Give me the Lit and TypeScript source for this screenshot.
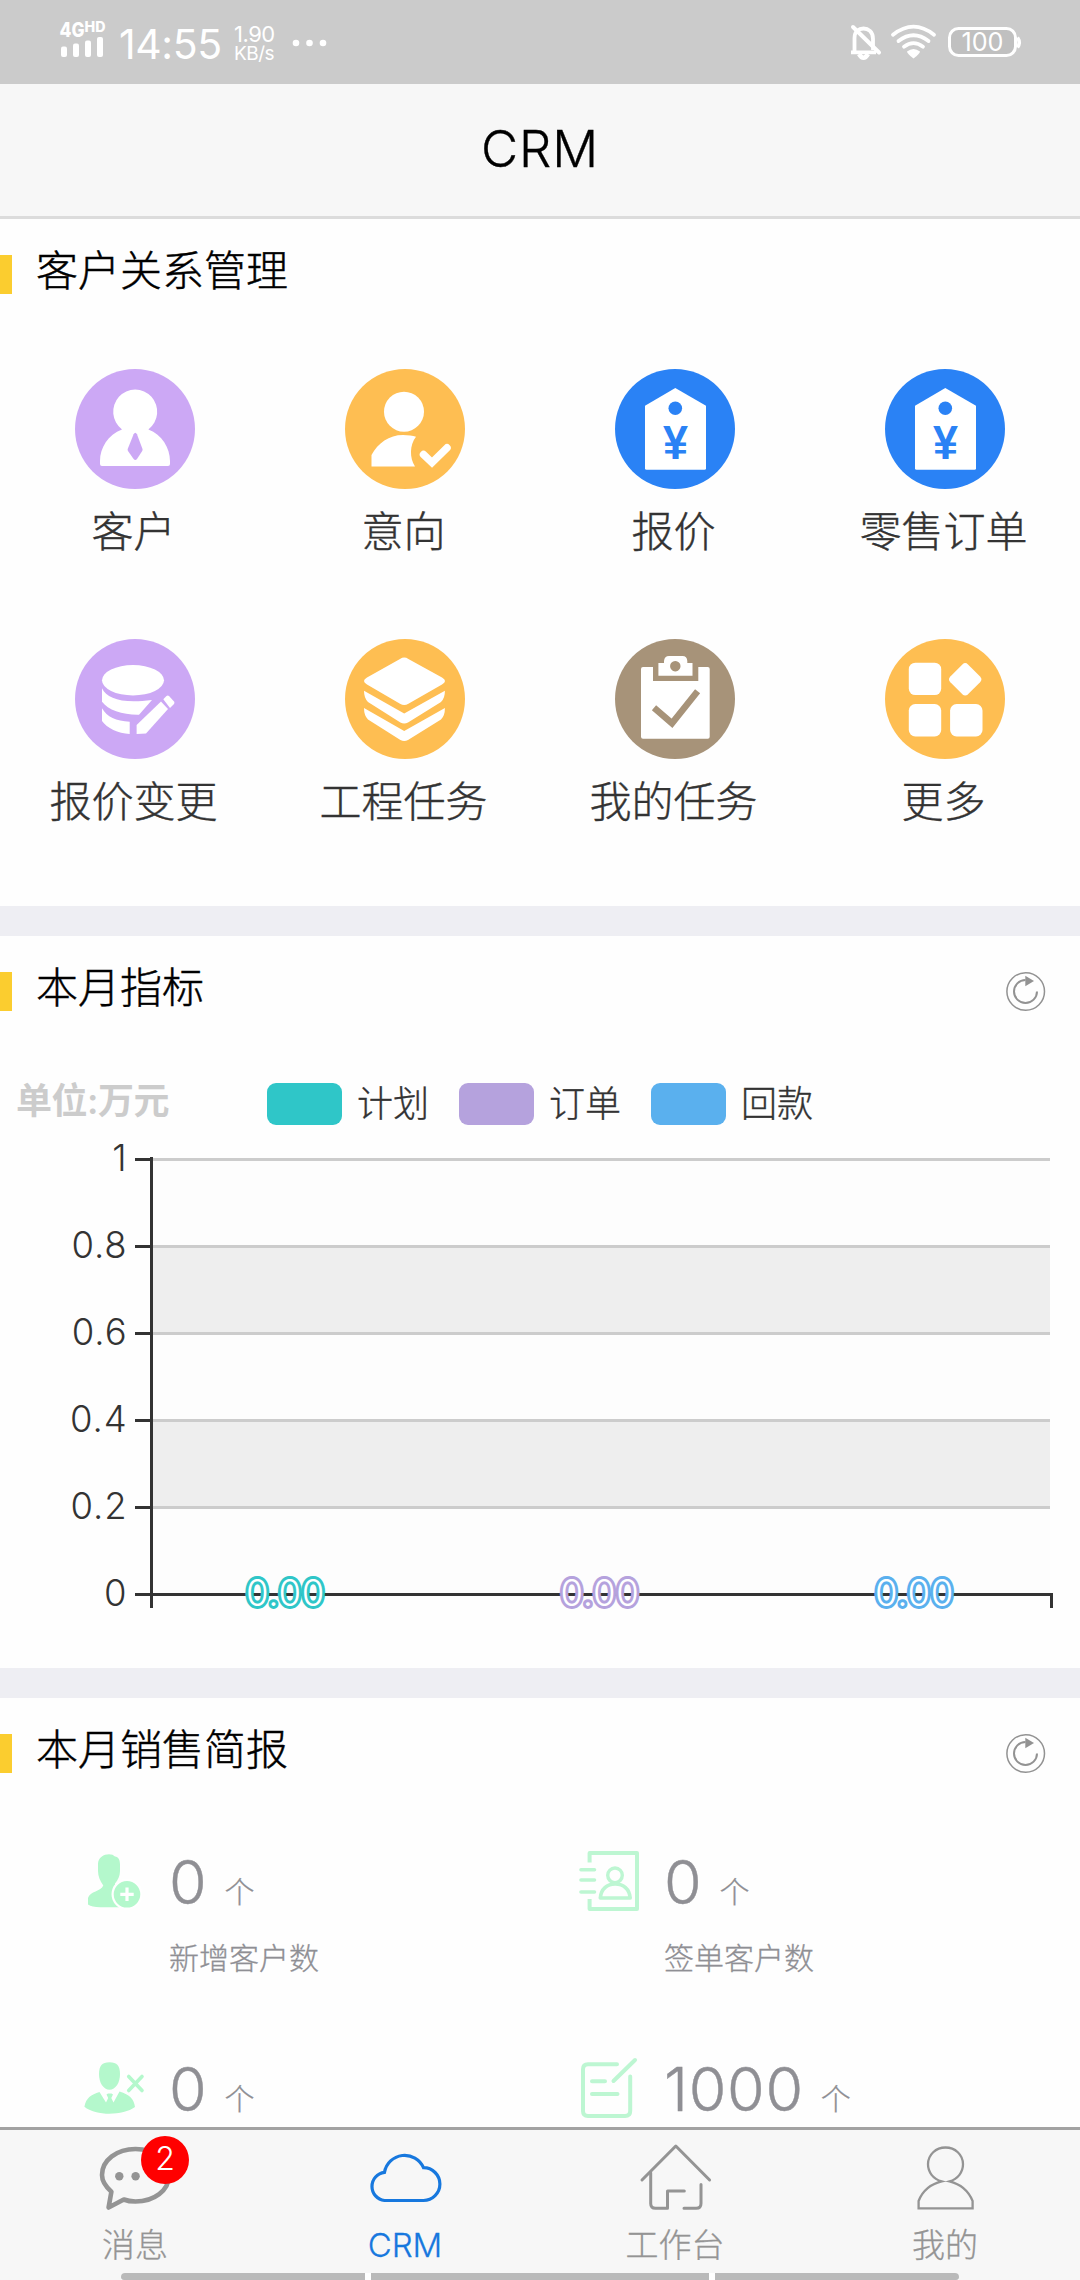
import { LitElement, html, svg, css } from "lit";
import { customElement } from "lit/decorators.js";

const PURPLE = "#cca8f5";
const ORANGE = "#febe52";
const BLUE = "#2a82f5";
const BROWN = "#a79379";

const tagIcon = svg`
  <path fill="#fff" d="M60.3 19 91 36.7V99.2q0 1.5-1.5 1.5h-58q-1.5 0-1.5-1.5V36.7Z"/>
  <circle cx="60.3" cy="39.3" r="6.8" fill="${BLUE}"/>
  <text class="yen" x="48" y="89.7" textLength="25" lengthAdjust="spacingAndGlyphs">¥</text>`;

const apps = [
  { label: "客户", color: PURPLE, icon: svg`
      <path fill="#fff" d="M47 60.5A22 22.2 0 1 1 73.4 60.5C87 65.500 95 79 95 92v3q0 2-2 2H27q-2 0-2-2v-3C25 79 33 65.500 47 60.500Z"/>
      <path fill="${PURPLE}" d="M58.600 65.200q1.700-3 3.400 0L67.500 80q.3 1-.3 2L62 90q-1.700 2.200-3.400 0L53 82q-.6-1-.3-2Z"/>` },
  { label: "意向", color: ORANGE, icon: svg`
      <circle cx="59" cy="42.700" r="20" fill="#fff"/>
      <path fill="#fff" d="M26.500 97.500V86C33 74 44 66 58 66q8 0 13 1.800C64.500 76 64.500 89 70 97.500Z"/>
      <path fill="none" stroke="#fff" stroke-width="7.500" stroke-linecap="round" d="M78.500 85.500 87 93.600 102 78.800"/>` },
  { label: "报价", color: BLUE, icon: tagIcon },
  { label: "零售订单", color: BLUE, icon: tagIcon },
  { label: "报价变更", color: PURPLE, icon: svg`
      <g fill="#fff">
        <ellipse cx="58" cy="41.200" rx="31" ry="15.200"/>
        <path d="M27 49.300C32 60 48 65 77 61L64 75.700C48 76 33 71 27 62.700Z"/>
        <path d="M27 69.300C32 78 41 82 54.700 82.700V95C43 94.500 32 89 27 82Z"/>
        <path d="M61.600 86 86 62.500 93 70 71 94.500 61.600 95Z"/>
        <path d="M88.300 60.300 91.500 57q1.300-1 2.500 0l5 5.500q1 1.200 0 2.400L95 69Z"/>
      </g>` },
  { label: "工程任务", color: ORANGE, icon: svg`
      <g fill="#fff">
        <path d="M55 20q4.200-2.800 8.400 0L97 38.500q6 3.500 0 7L63.400 64.800q-4.200 2.400-8.400 0L22 45.500q-6-3.500 0-7Z"/>
        <path d="M19 51.700 59.200 74.500 99.900 51.700Q100 59 96 63L63 83.500q-3.800 2-7.600 0L23 63Q19 59 19 51.700Z"/>
        <path d="M19 69 59.200 92 99.900 69Q100 76.500 96 80.500L63 101q-3.800 2-7.600 0L23 80.500Q19 76.500 19 69Z"/>
      </g>` },
  { label: "我的任务", color: BROWN, icon: svg`
      <path fill="#fff" d="M28 28H38V42H83.300V28h9.400q2 0 2 2V97.700q0 2-2 2H28q-2 0-2-2V30q0-2 2-2Z"/>
      <path fill="#fff" fill-rule="evenodd" d="M43.400 24H49V22q.5-5 5-5h13.500q4.500 0 4.800 5v2h5.200V36.700H43.400ZM60.300 22a5.200 5.200 0 1 0 .01 0Z"/>
      <path fill="none" stroke="${BROWN}" stroke-width="6.500" d="M39 68.800 57 84.300 82.600 52.300"/>` },
  { label: "更多", color: ORANGE, icon: svg`
      <g fill="#fff">
        <rect x="23.800" y="23.700" width="32.400" height="32.400" rx="6.500"/>
        <rect x="23.800" y="65" width="32.400" height="32.400" rx="6.500"/>
        <rect x="65.100" y="65" width="32.400" height="32.400" rx="6.500"/>
        <rect x="67.700" y="27.800" width="25" height="25" rx="4" transform="rotate(45 80.200 40.300)"/>
      </g>` },
];

const legend = [
  { name: "计划", color: "#2fc6c8", x: 285.5 },
  { name: "订单", color: "#b5a2dd", x: 600 },
  { name: "回款", color: "#5ab0ee", x: 914.5 },
];

const ticks = ["1", "0.8", "0.6", "0.4", "0.2", "0"];

const stats = [
  { value: "0", label: "新增客户数", icon: svg`
      <path fill="#b4f8cc" d="M19.300 34.500C16 30 14 25 14 20V13C14 6.500 20 3.300 25 3.300q4 0 6 2.200c3.500.3 5 3.500 5 8V20c0 5-2 9-5 12.500V38l8 4-4 14.300H16Q8 56.300 4 53.500V47C6 40 17 40.500 19.300 34.500Z"/>
      <circle cx="43" cy="43.300" r="14.400" fill="#b4f8cc" stroke="#fff" stroke-width="2.200"/>
      <path fill="none" stroke="#fff" stroke-width="3.200" d="M36.300 43.300H49.700M43 36.600V50"/>` },
  { value: "0", label: "签单客户数", icon: svg`
      <g fill="none" stroke="#bdf6d2" stroke-width="4" stroke-linejoin="round">
        <path d="M10.600 11.500V2H58V58H10.600V48"/>
        <path stroke-linecap="round" stroke-width="3.600" d="M2 18.700H15.500M2 29H15.500M2 41H15.500"/>
        <circle cx="36" cy="24.300" r="7.300" stroke-width="3.400"/>
        <path stroke-width="3.600" d="M21.300 47C22 38 28 33 36.200 33S50.500 38 51.200 47Z"/>
      </g>` },
  { value: "0", label: "", icon: svg`
      <path fill="#b4f8cc" d="M15 16C15 8 18 4.300 25.500 4.300S36 8 36 16C36 25 31.500 31.700 25.500 31.700S15 25 15 16Z"/>
      <path fill="#b4f8cc" d="M15.500 34 22 44.500 24.200 40 22.500 36.500 24 35.500H27.500L29 36.500 27.300 40 29.500 44.500 35.500 33.500C46 37 50 41 51 49 45 53.500 35 55.700 25.500 55.700S6 53.500.4 48.700C2 40 7 36.500 15.500 34Z"/>
      <path fill="none" stroke="#b4f8cc" stroke-width="3.600" stroke-linecap="round" d="M44.700 18.500 58 32.500M58 18.500 44.700 32.500"/>` },
  { value: "1000", label: "", icon: svg`
      <g fill="none" stroke="#bdf6d2" stroke-width="4" stroke-linecap="round">
        <path d="M38 6.300H9Q4 6.300 4 11.300V53Q4 58 9 58H46Q51.200 58 51.200 53V18.500"/>
        <path d="M13 23.300H26M13 36H38.500M34.500 23 56 2"/>
      </g>` },
];

const tabs = [
  { label: "消息", active: false, badge: "2", icon: svg`
      <path fill="none" stroke="#949494" stroke-width="4.600" stroke-linejoin="round" d="M13.400 49.700C7 44 4 38 4 33 4 18 19 7 37.500 7S71 18 71 33.300 56 59.500 37.500 59.500C33 59.500 29 58.800 25.800 57.500L10.600 65.500Z"/>
      <circle cx="21.300" cy="34.300" r="4.200" fill="#949494"/><circle cx="37.600" cy="34.300" r="4.200" fill="#949494"/>` },
  { label: "CRM", active: true, badge: "", icon: svg`
      <path fill="none" stroke="#1778de" stroke-width="3.200" d="M16.500 58.500A14.200 14.200 0 0 1 16.500 30.300 20.500 20.500 0 0 1 55.500 25.700 16.400 16.400 0 0 1 55.500 58.500Z"/>` },
  { label: "工作台", active: false, badge: "", icon: svg`
      <g fill="none" stroke="#949494" stroke-width="3" stroke-linecap="round" stroke-linejoin="round">
        <path d="M4 38 37.800 4 71.600 38"/>
        <path d="M12.700 30.700V61.500q0 4.800 4.800 4.800H29.500V49H46.300M63 42.500V61.500q0 4.800-4.800 4.800H46"/>
      </g>` },
  { label: "我的", active: false, badge: "", icon: svg`
      <path fill="none" stroke="#949494" stroke-width="2.300" d="M33.700 39.400C25 37 20 30 20 22.300 20 12.500 28 5.500 37.500 5.500S55 12.500 55 22.300C55 30 50 37 41.500 39.400 52 42 60.500 49 64.600 59V66.300H10.600V59C14.500 49 23 42 33.700 39.400Z"/>` },
];

@customElement("app-root")
export class AppRoot extends LitElement {
  static styles = css`
    :host {
      display: flex;
      flex-direction: column;
      width: 1080px;
      height: 2280px;
      overflow: hidden;
      background: #fefefe;
      color: #000;
      font-family: Inter, "Noto Sans CJK SC", sans-serif;
      font-weight: 300;
    }
    svg { display: block; flex: none; overflow: visible; }
    .status {
      display: flex;
      align-items: center;
      height: 84px;
      flex: none;
      padding: 0 60px;
      box-sizing: border-box;
      background: #cbcbcb;
      color: #fff;
    }
    .net { font-weight: 800; fill: #fff; }
    .clock { width: 102px; margin-left: 13px; margin-top: 3px; font-size: 41px; line-height: 48px; font-weight: 400; letter-spacing: -0.4px; white-space: nowrap; }
    .speed { margin-left: 13px; margin-top: 3px; width: 58px; font-weight: 400; line-height: 20px; font-size: 19px; letter-spacing: -0.5px; }
    .speed .rate { font-size: 22px; }
    .grow { flex: 1; }
    .battery-text { font-size: 25px; font-weight: 400; fill: #fff; }
    .navbar {
      flex: none;
      height: 132px;
      display: flex;
      align-items: center;
      justify-content: center;
      background: #f7f7f7;
      border-bottom: 3px solid #dcdcdc;
      font-size: 51px;
    }
    .brand { margin-top: -4px; letter-spacing: 0.8px; -webkit-text-stroke: 0.3px; }
    .content { height: 1908px; flex: none; overflow: hidden; }
    .section { border-bottom: 30px solid #eeeef3; }
    .head { display: flex; padding-top: 36px; height: 39px; align-items: center; padding-right: 34px; }
    .mark { width: 12px; height: 39px; background: #fbcd2f; }
    .title { margin: -8px auto 0 24px; font-size: 42px; line-height: 42px; -webkit-text-stroke: 0.45px; }
    .apps { display: grid; grid-template-columns: repeat(4, 270px); grid-auto-rows: 270px; padding-top: 75px; height: 537px; box-sizing: content-box; }
    .app { display: flex; flex-direction: column; align-items: center; gap: 19px; color: #333; font-size: 42px; line-height: 48px; -webkit-text-stroke: 0.4px; }
    .app-name { margin-right: 3px; }
    .yen { font: bold 49px "Liberation Sans", sans-serif; fill: #2a82f5; -webkit-text-stroke: 0; }
    .legend { display: flex; align-items: center; height: 42px; margin-top: 72px; }
    .unit { width: 251px; margin-left: 16px; color: #ccc; font-size: 36px; line-height: 42px; font-weight: 600; letter-spacing: -0.5px; margin-top: -7px; }
    .item { display: flex; align-items: center; width: 192px; color: #333; font-size: 36px; line-height: 42px; -webkit-text-stroke: 0.35px; }
    .swatch { width: 75px; height: 42px; border-radius: 9px; margin-right: 15px; }
    .axis { font-size: 36.5px; fill: #333; letter-spacing: 0.9px; }
    .point { font-size: 36.5px; fill: #fff; stroke-width: 6px; paint-order: stroke; stroke-linejoin: round; letter-spacing: 0.7px; }
    .stats { display: grid; grid-template-columns: 495px 495px; grid-auto-rows: 207px; padding: 78px 0 0 84px; color: #8f8f94; }
    .stat { display: flex; gap: 25px; align-items: flex-start; }
    .num { display: flex; align-items: baseline; height: 60px; gap: 17px; font-size: 61px; line-height: 60px; letter-spacing: 0.7px; margin-top: 1px; }
    .value { -webkit-text-stroke: 0.4px; }
    .suffix { font-size: 30px; letter-spacing: 0; position: relative; top: -1px; -webkit-text-stroke: 0.3px; }
    .caption { font-size: 30px; line-height: 36px; margin-top: 28px; -webkit-text-stroke: 0.3px; }
    .tabbar {
      flex: none;
      height: 153px;
      box-sizing: border-box;
      display: grid;
      grid-template-columns: repeat(4, 270px);
      border-top: 3px solid #a2a2a2;
      background: #f7f7f7;
      position: relative;
    }
    .tab { display: flex; flex-direction: column; align-items: center; padding-top: 12px; color: #949494; font-size: 33px; line-height: 40px; position: relative; }
    .tab.active { color: #1778de; }
    .name { margin-top: 8px; -webkit-text-stroke: 0.3px; }
    .badge { position: absolute; left: 141px; top: 6px; width: 48px; height: 48px; border-radius: 24px; background: #f00; color: #fff; font-size: 32px; line-height: 46px; text-align: center; }
    .home { position: absolute; left: 121px; bottom: 0; width: 838px; height: 7px; display: flex; gap: 6px; background: #fff; border-radius: 4px 4px 0 0; }
    .bar { flex: 244; background: #bababa; border-radius: 4px 0 0 3px; }
    .bar.mid { flex: 338; border-radius: 0; }
    .bar.end { border-radius: 0 4px 3px 0; }
  `;

  private head(title: string, refresh: boolean) {
    return html`<div class="head">
      <div class="mark"></div>
      <div class="title">${title}</div>
      ${refresh ? html`<svg width="40" height="39" viewBox="0 0 40 39">
        <circle cx="19.700" cy="19.500" r="18.800" fill="none" stroke="#929292" stroke-width="1.500"/>
        <path fill="none" stroke="#929292" stroke-width="2" d="M31 19.500A11.500 11.500 0 1 1 19.500 8"/>
        <path fill="#929292" d="M19.300 3.700 28 9 19.300 14.300Z"/>
      </svg>` : ""}
    </div>`;
  }

  private chart() {
    return html`<svg width="1080" height="543" viewBox="0 1125 1080 543">
      ${[0, 1, 2, 3, 4].map((i) => svg`
        <rect x="153" y="${1159.5 + i * 87}" width="897" height="87" fill="${i % 2 ? "#eee" : "#fdfdfd"}"/>`)}
      ${ticks.map((t, i) => svg`
        ${i < 5 ? svg`<rect x="153" y="${1158 + i * 87}" width="897" height="3" fill="#ccc"/>` : ""}
        <rect x="135" y="${1158 + i * 87}" width="15" height="3" fill="#333"/>
        <text class="axis" x="127.500" y="${1171 + i * 87}" text-anchor="end">${t}</text>`)}
      <rect x="150" y="1157" width="3" height="451" fill="#333"/>
      <rect x="150" y="1593" width="903" height="3" fill="#333"/>
      <rect x="1050" y="1593" width="3" height="15" fill="#333"/>
      ${legend.map((l) => svg`<text class="point" x="${l.x}" y="1605.500" text-anchor="middle" stroke="${l.color}">0.00</text>`)}
    </svg>`;
  }

  render() {
    return html`
      <div class="status">
        <svg width="46" height="84" viewBox="60 0 46 84" fill="#fff">
          <text class="net" x="59.500" y="37" font-size="20.500" textLength="25" lengthAdjust="spacingAndGlyphs">4G</text>
          <text class="net" x="84.500" y="32.300" font-size="14" textLength="21" lengthAdjust="spacingAndGlyphs">HD</text>
          <rect x="61" y="46.500" width="6" height="10.500" rx="2"/>
          <rect x="73" y="43.500" width="6" height="13.500" rx="2"/>
          <rect x="85" y="40.500" width="6" height="16.500" rx="2"/>
          <rect x="97" y="37" width="6" height="20" rx="2"/>
        </svg>
        <div class="clock">14:55</div>
        <div class="speed"><div class="rate">1.90</div><div>KB/s</div></div>
        <svg width="36" height="84" viewBox="293 0 36 84" fill="#fff">
          <circle cx="297" cy="43" r="3.300"/><circle cx="310.500" cy="43" r="3.300"/><circle cx="324" cy="43" r="3.300"/>
        </svg>
        <div class="grow"></div>
        <svg width="170" height="84" viewBox="850 0 170 84" fill="none" stroke="#fff" stroke-width="3.800">
          <path d="M854.500 53V38C854.500 31 859 28.500 863.500 28.500S873 31.500 873 39V50M851 52.300H876"/>
          <path d="M859 54Q863.500 61.500 868 54" stroke-width="4.500"/>
          <path d="M853 27 879 52.500" stroke-linecap="round" stroke-width="4"/>
          <path stroke-linecap="round" d="M893 34.700Q913.500 18.500 934 34.700M898.500 41Q913.500 29.500 928.500 41M904 46.700Q913.500 39.500 923 46.700"/>
          <path stroke="none" fill="#fff" d="M907 51.500Q913.500 46.500 920 51.500 920 53.500 913.500 58.500 907 53.500 907 51.500Z"/>
          <rect x="949.500" y="28.500" width="66" height="27" rx="9" fill="#c0c0c0" stroke-width="3"/>
          <path d="M1017.500 37.500Q1021 42.500 1017.500 47.500" stroke-width="3.500"/>
          <text class="battery-text" stroke="none" x="982.500" y="51.300" text-anchor="middle" textLength="42" lengthAdjust="spacingAndGlyphs">100</text>
        </svg>
      </div>
      <div class="navbar"><div class="brand">CRM</div></div>
      <div class="content">
        <div class="section">
          ${this.head("客户关系管理", false)}
          <div class="apps">
            ${apps.map((a) => html`<div class="app">
              <svg width="120" height="120" viewBox="0 0 120 120"><circle cx="60" cy="60" r="60" fill="${a.color}"/>${a.icon}</svg>
              <div class="app-name">${a.label}</div>
            </div>`)}
          </div>
        </div>
        <div class="section">
          ${this.head("本月指标", true)}
          <div class="legend">
            <div class="unit">单位:万元</div>
            ${legend.map((l) => html`<div class="item"><div class="swatch" style="background:${l.color}"></div>${l.name}</div>`)}
          </div>
          ${this.chart()}
        </div>
        ${this.head("本月销售简报", true)}
        <div class="stats">
          ${stats.map((s) => html`<div class="stat">
            <svg width="60" height="60" viewBox="0 0 60 60">${s.icon}</svg>
            <div>
              <div class="num"><span class="value">${s.value}</span><span class="suffix">个</span></div>
              ${s.label ? html`<div class="caption">${s.label}</div>` : ""}
            </div>
          </div>`)}
        </div>
      </div>
      <div class="tabbar">
        ${tabs.map((t) => html`<div class="tab ${t.active ? "active" : ""}">
          <svg width="75" height="75" viewBox="0 0 75 75">${t.icon}</svg>
          <div class="name">${t.label}</div>
          ${t.badge ? html`<div class="badge">${t.badge}</div>` : ""}
        </div>`)}
        <div class="home"><div class="bar"></div><div class="bar mid"></div><div class="bar end"></div></div>
      </div>`;
  }
}
